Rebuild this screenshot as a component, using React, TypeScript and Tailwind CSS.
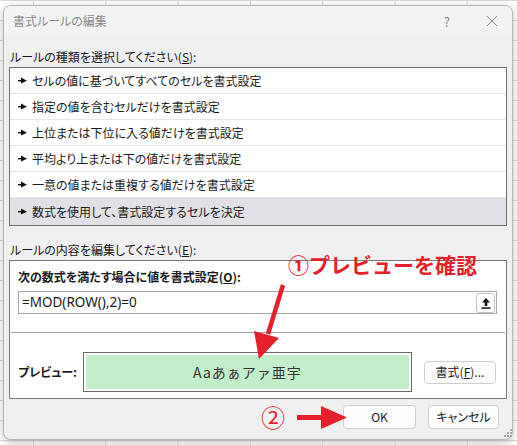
import React from "react";

const items = [
  "セルの値に基づいてすべてのセルを書式設定",
  "指定の値を含むセルだけを書式設定",
  "上位または下位に入る値だけを書式設定",
  "平均より上または下の値だけを書式設定",
  "一意の値または重複する値だけを書式設定",
  "数式を使用して、書式設定するセルを決定",
];

function Bullet() {
  return (
    <svg width="9" height="7" viewBox="0 0 9 7" className="shrink-0">
      <rect x="0" y="3" width="4" height="1.4" fill="#111" />
      <polygon points="3,0.5 9,3.7 3,6.5" fill="#111" />
    </svg>
  );
}

export default function App() {
  return (
    <div className="relative w-[517px] h-[445px] overflow-hidden bg-white bg-[linear-gradient(to_right,#d9d9d9_1px,transparent_1px),linear-gradient(to_bottom,#d9d9d9_1px,transparent_1px)] bg-[size:72.3px_20px] bg-[position:33px_0px] font-['Noto_Sans_CJK_JP',sans-serif] [font-feature-settings:'palt'] text-[#1a1a1a]">
      <div className="ml-[3px] pt-[5px]">
        <div className="w-[510px] h-[435px] rounded-[8px] border border-[#b8b8b8] bg-[#f0f0f0] shadow-[0_2px_8px_rgba(0,0,0,0.25)] flex flex-col overflow-hidden">
          {/* title bar */}
          <div className="h-[30px] bg-[#f3f3f3] flex items-center pl-[9px] pr-[14px]">
            <span className="text-[12px] text-[#8a8a8a] leading-none">書式ルールの編集</span>
            <span className="ml-auto text-[13px] text-[#8a8a8a] leading-none mr-[36px]">?</span>
            <svg width="12" height="12" viewBox="0 0 12 12">
              <path d="M1 1 L11 11 M11 1 L1 11" stroke="#8a8a8a" strokeWidth="1" />
            </svg>
          </div>
          {/* body */}
          <div className="flex-1 flex flex-col px-[5px]">
            <div className="mt-[12px] h-[17px] leading-[17px] text-[12px] pl-[1px]">
              ルールの種類を選択してください(<span className="underline">S</span>):
            </div>
            <div className="mt-[2px] border border-[#707070] bg-white flex flex-col">
              {items.map((t, i) => (
                <div
                  key={i}
                  className={
                    i === 5
                      ? "h-[27px] flex items-center gap-[5px] pl-[8px] bg-[#e0e0e5] text-[12px]"
                      : "h-[26px] flex items-center gap-[5px] pl-[8px] border-b border-[#e6e6e6] text-[12px]"
                  }
                >
                  <Bullet />
                  <span className="leading-none">{t}</span>
                </div>
              ))}
            </div>
            <div className="mt-[15px] h-[17px] leading-[17px] text-[12px] pl-[1px]">
              ルールの内容を編集してください(<span className="underline">E</span>):
            </div>
            <div className="mt-[2px] h-[139px] border border-[#7a7a7a] bg-white flex flex-col">
              <div className="pl-[8px] pr-[9px] pt-[8px]">
                <div className="h-[16px] leading-[16px] text-[12px] font-bold">
                  次の数式を満たす場合に値を書式設定(<span className="underline">O</span>):
                </div>
                <div className="mt-[6px] h-[23px] border border-[#a8a8a8] flex items-center pl-[3px] pr-[1px]">
                  <span className="text-[13.5px] leading-none font-['Noto_Sans',sans-serif] [font-feature-settings:normal]">=MOD(ROW(),2)=0</span>
                  <div className="ml-auto w-[19px] h-[20px] rounded-[3px] border border-[#c4c4c4] flex items-center justify-center">
                    <svg width="10" height="12" viewBox="0 0 10 12">
                      <path d="M5 1 L9 5.5 L6.3 5.5 L6.3 9 L3.7 9 L3.7 5.5 L1 5.5 Z" fill="#111" />
                      <rect x="0.5" y="10.3" width="9" height="1.5" fill="#111" />
                    </svg>
                  </div>
                </div>
              </div>
              <div className="mt-[18px] mx-[1px] h-px bg-[#a0a0a0]" />
              <div className="mt-[19px] flex items-center pl-[8px] pr-[10px]">
                <div className="w-[65px] text-[12px] font-bold leading-none">プレビュー:</div>
                <div className="w-[329px] h-[40px] border border-[#6a6a6a] p-[2px] bg-white">
                  <div className="w-full h-full bg-[#c3eecb] flex items-center justify-center">
                    <span className="text-[14px] tracking-[1px] text-[#333] leading-none [font-feature-settings:normal]">Aaあぁアァ亜宇</span>
                  </div>
                </div>
                <div className="ml-auto w-[72px] h-[23px] rounded-[4px] border border-[#cfcfcf] bg-[#fdfdfd] flex items-center justify-center text-[12px] leading-none">
                  書式(<span className="underline">F</span>)...
                </div>
              </div>
            </div>
            <div className="mt-[6px] flex justify-end gap-[12px] pr-[8px]">
              <div className="w-[73px] h-[24px] rounded-[4px] border border-[#cfcfcf] bg-[#fdfdfd] flex items-center justify-center text-[12px] leading-none">
                OK
              </div>
              <div className="w-[71px] h-[24px] rounded-[4px] border border-[#cfcfcf] bg-[#fdfdfd] flex items-center justify-center text-[12px] leading-none">
                キャンセル
              </div>
            </div>
          </div>
        </div>
      </div>

      {/* resize grip */}
      <svg className="absolute left-[503px] top-[428px]" width="10" height="10" viewBox="0 0 10 10">
        <g fill="#a8a8a8">
          <rect x="7" y="1" width="2" height="2" />
          <rect x="4" y="4" width="2" height="2" />
          <rect x="7" y="4" width="2" height="2" />
          <rect x="1" y="7" width="2" height="2" />
          <rect x="4" y="7" width="2" height="2" />
          <rect x="7" y="7" width="2" height="2" />
        </g>
      </svg>

      {/* annotations */}
      <div className="absolute left-[288px] top-[254px] text-[21px] font-bold text-[#e5202a] leading-none [font-feature-settings:normal]">
        ①プレビューを確認
      </div>
      <div className="absolute left-[261px] top-[405px] text-[24px] text-[#e5202a] leading-none [font-feature-settings:normal]">
        ②
      </div>
      <svg className="absolute left-0 top-0 pointer-events-none" width="517" height="445" viewBox="0 0 517 445">
        <line x1="283" y1="285" x2="268" y2="334" stroke="#e5202a" strokeWidth="4.5" />
        <polygon points="254,331 279,338 259,359" fill="#e5202a" />
        <line x1="297" y1="417.5" x2="324" y2="417.5" stroke="#e5202a" strokeWidth="5" />
        <polygon points="321,406 347,417.5 321,429" fill="#e5202a" />
      </svg>
    </div>
  );
}
